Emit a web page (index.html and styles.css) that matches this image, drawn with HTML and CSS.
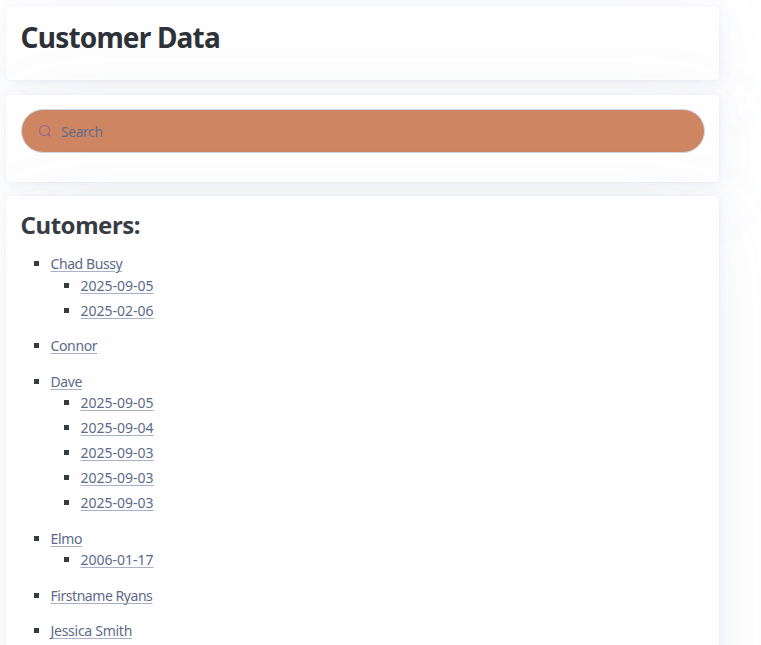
FILE: index.html
```html
<!DOCTYPE html>
<html lang="en">
<head>
<meta charset="utf-8">
<title>Customer Data</title>
<link rel="stylesheet" href="styles.css">
</head>
<body>
<main>
<article class="card header-card"><h1>Customer Data</h1></article>
<article class="card search-card">
<div class="search">
<svg width="14" height="14" viewBox="0 0 14 14" fill="none" stroke="#9a6590" stroke-width="1.1"><circle cx="6.5" cy="6.5" r="5"/><path d="M10 10l2.5 2.5"/></svg>
<span>Search</span>
</div>
</article>
<article class="card list-card">
<h2>Cutomers:</h2>
<ul class="customers">
<li><a class="chad">Chad Bussy</a>
<ul><li><a>2025-09-05</a></li><li><a>2025-02-06</a></li></ul></li>
<li><a class="connor">Connor</a></li>
<li><a class="dave">Dave</a>
<ul><li><a>2025-09-05</a></li><li><a>2025-09-04</a></li><li><a>2025-09-03</a></li><li><a>2025-09-03</a></li><li><a>2025-09-03</a></li></ul></li>
<li><a class="elmo">Elmo</a>
<ul><li><a>2006-01-17</a></li></ul></li>
<li><a class="ryans">Firstname Ryans</a></li>
<li><a class="jessica">Jessica Smith</a></li>
</ul>
</article>
</main>
</body>
</html>
```
FILE: styles.css
```css
* { box-sizing: border-box; }
html { overflow: hidden; }
body {
  margin: 0;
  height: 645px;
  overflow: hidden;
  background: #fff;
  color: #373c44;
  font: 14.25px/1.5 "Noto Sans", "Open Sans", sans-serif;
}
main { width: 713px; margin: 6px 0 0 6px; }
.card {
  padding: 14px 14px 14px 15px;
  border-radius: 4px;
  background: #fefefe;
  box-shadow:
    0.2px 0.4px 2.5px rgba(129, 145, 181, 0.017),
    0.5px 1px 5px rgba(129, 145, 181, 0.024),
    0.9px 1.8px 9px rgba(129, 145, 181, 0.03),
    1.6px 3.2px 16px rgba(129, 145, 181, 0.036),
    3px 6px 31px rgba(129, 145, 181, 0.043),
    7px 14px 86px rgba(129, 145, 181, 0.06),
    0 0 0 0.2px rgba(129, 145, 181, 0.015);
}
.header-card { height: 74px; margin-bottom: 15px; }
.search-card { height: 87px; margin-bottom: 14px; }
.list-card { height: 700px; }
h1, h2 { margin: 0 0 0 -0.4px; font-weight: 700; white-space: nowrap; }
h1 { color: #2d3138; font-size: 28px; line-height: 35px; letter-spacing: -0.82px; }
h2 { color: #373c44; font-size: 24px; line-height: 29px; letter-spacing: -0.47px; }
.search {
  display: flex;
  align-items: center;
  gap: 9px;
  height: 44px;
  padding-left: 16px;
  border: 1px solid #cfd5e2;
  border-radius: 22px;
  background: #ce8662;
  color: #646b88;
  font-size: 13.8px;
  letter-spacing: -0.35px;
}
.search span { padding-top: 2px; }
ul { margin: 0; padding: 0; list-style: none; }
.customers { padding: 14.3px 0 0 29.5px; }
li { position: relative; margin-bottom: 14.25px; }
li li { margin-bottom: 3.57px; }
li ul { padding-left: 30px; }
li::before {
  content: "";
  position: absolute;
  left: -16.5px;
  top: 8px;
  width: 5px;
  height: 5px;
  background: #373c44;
}
a {
  display: block;
  width: max-content;
  height: 21.375px;
  color: #5d6b89;
  font-size: 14px;
  line-height: 21.375px;
  text-decoration: underline 1px #a9b1c8;
  text-underline-offset: 2px;
}
.chad { letter-spacing: -0.42px; }
.connor, .dave, .elmo { letter-spacing: -0.36px; }
.ryans { letter-spacing: -0.45px; }
.jessica { letter-spacing: -0.27px; }
```
